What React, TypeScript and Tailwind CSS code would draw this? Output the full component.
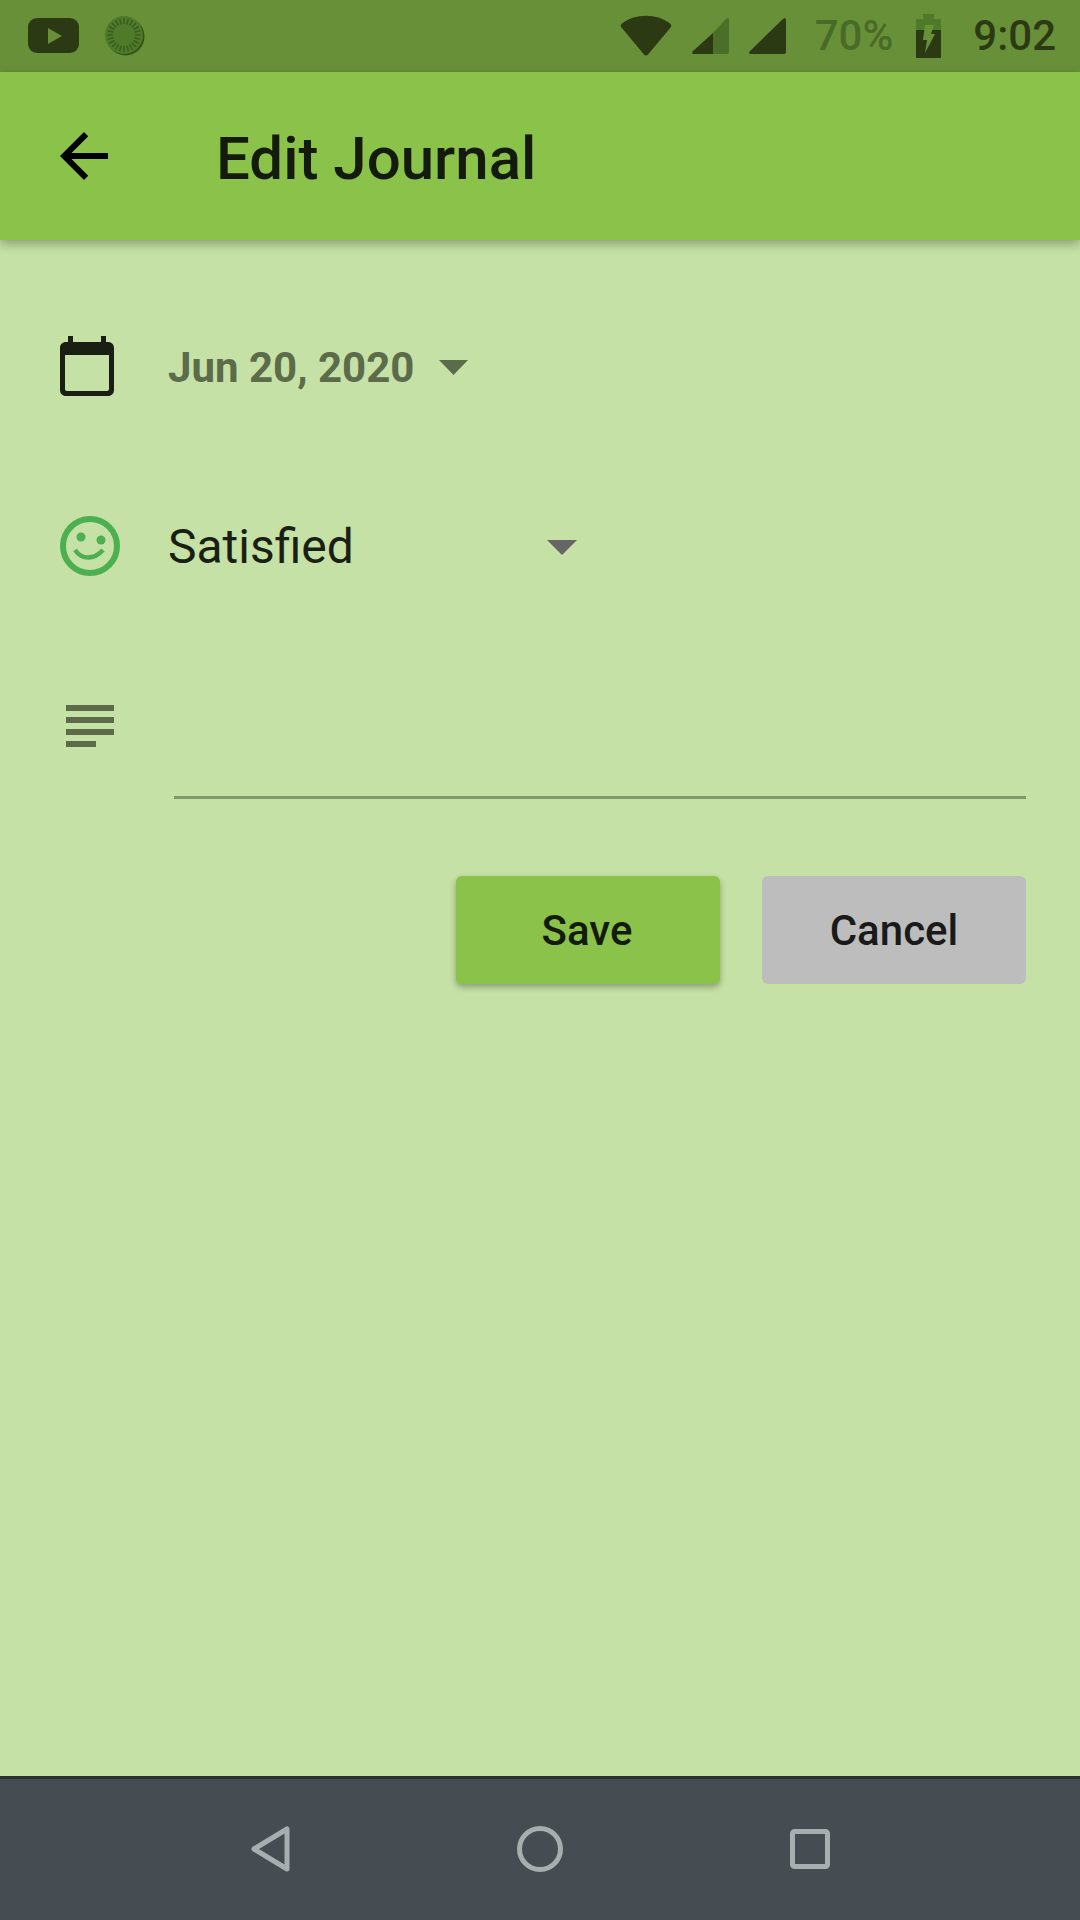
const ticks = Array.from({ length: 24 }, (_, i) => i * 15);

const StatusBar = () => (
  <div className="flex h-[72px] w-full shrink-0 items-center bg-[#689038]">
    <svg width="51" height="35" viewBox="0 0 51 35" className="ml-[28px] mb-[1px]">
      <rect width="51" height="35" rx="9" fill="#2c3a14" />
      <path d="M20 10 L34 18 L20 26 Z" fill="#689038" />
    </svg>
    <svg width="42" height="42" viewBox="0 0 42 42" className="ml-[25px]">
      <circle cx="21.5" cy="21.5" r="19" fill="#36521b" />
      <circle cx="20" cy="20" r="19" fill="#4f7a2a" />
      {ticks.map((a) => (
        <line
          key={a}
          x1="20"
          y1="3"
          x2="20"
          y2="9"
          stroke="#3a5c1e"
          strokeWidth="1.5"
          transform={`rotate(${a} 20 20)`}
        />
      ))}
    </svg>
    <svg width="52" height="42" viewBox="0 0 52 42" className="ml-auto mb-[2px]">
      <path
        d="M1.5 10 C14 -1 38 -1 50.5 10 C51.5 11 51.5 12 51 13 L28 40.5 C27 41.8 25 41.8 24 40.5 L1 13 C0.5 12 0.5 11 1.5 10 Z"
        fill="#2c3a14"
      />
    </svg>
    <svg width="37" height="37" viewBox="0 0 37 37" className="ml-[20px] mb-[2px]">
      <path d="M21 16 L34 2 C35.5 0.5 37 1 37 3 L37 35 C37 36 36 37 35 37 L21 37 Z" fill="#4b6f28" />
      <path d="M21 16 L21 37 L2 37 C0 37 -0.5 35.5 1 34 Z" fill="#2c3a14" />
    </svg>
    <svg width="37" height="37" viewBox="0 0 37 37" className="ml-[20px] mb-[2px]">
      <path d="M34 2 C35.5 0.5 37 1 37 3 L37 35 C37 36 36 37 35 37 L2 37 C0 37 -0.5 35.5 1 34 Z" fill="#2c3a14" />
    </svg>
    <span className="ml-[29px] font-['Roboto',sans-serif] text-[42px] font-medium leading-none text-[#4a6b28]">70%</span>
    <svg width="25" height="44" viewBox="0 0 25 44" className="ml-[23px]">
      <rect x="7" y="0" width="11" height="5" fill="#4f7a2a" />
      <rect x="0" y="5" width="25" height="11" fill="#4f7a2a" />
      <rect x="0" y="16" width="25" height="28" fill="#2c3a14" />
      <path d="M9 11 L18 11 L15 20 L19 20 L9 39 L11 26 L7 26 Z" fill="#689038" />
    </svg>
    <span className="ml-[32px] mr-[24px] font-['Roboto',sans-serif] text-[42px] font-medium leading-none text-[#2c3a14]">9:02</span>
  </div>
);

const AppBar = () => (
  <div className="relative z-10 flex h-[168px] w-full shrink-0 items-center bg-[#8bc34a] pl-[48px] shadow-[0_4px_10px_rgba(0,0,0,0.3)]">
    <svg width="72" height="72" viewBox="0 0 24 24">
      <path d="M20 11H7.83l5.59-5.59L12 4l-8 8 8 8 1.41-1.41L7.83 13H20v-2z" fill="#000" />
    </svg>
    <span className="ml-[96px] pt-[6px] font-['Roboto',sans-serif] text-[60px] font-medium leading-none text-[#141a0c]">
      Edit Journal
    </span>
  </div>
);

const Caret = ({ color, w, h }: { color: string; w: number; h: number }) => (
  <svg width={w} height={h} viewBox={`0 0 ${w} ${h}`}>
    <path d={`M0 0 L${w} 0 L${w / 2} ${h} Z`} fill={color} />
  </svg>
);

const App = () => {
  return (
    <div className="flex h-[1920px] w-[1080px] flex-col overflow-hidden bg-[#c5e1a5]">
      <StatusBar />
      <AppBar />
      <main className="flex flex-1 flex-col pl-[60px] pr-[54px]">
        <div className="mt-[96px] flex h-[60px] items-center">
          <svg width="54" height="60" viewBox="0 0 54 60">
            <path
              d="M8 6 V0 H13 V6 H41 V0 H46 V6 H48 C51.5 6 54 8.5 54 12 V54 C54 57.5 51.5 60 48 60 H6 C2.5 60 0 57.5 0 54 V12 C0 8.5 2.5 6 6 6 Z M5 19 V53 C5 54.2 5.8 55 7 55 H47 C48.2 55 49 54.2 49 53 V19 Z"
              fill="#1a1f14"
              fillRule="evenodd"
            />
          </svg>
          <span className="ml-[54px] pt-[4px] font-['Roboto',sans-serif] text-[42px] font-bold leading-none text-[#5c6b4a]">
            Jun 20, 2020
          </span>
          <span className="ml-[25px] flex pt-[2px]">
            <Caret color="#5c6b4a" w={29} h={15} />
          </span>
        </div>

        <div className="mt-[120px] flex h-[60px] items-center">
          <svg width="60" height="60" viewBox="0 0 60 60">
            <circle cx="30" cy="30" r="27" fill="none" stroke="#4caf50" strokeWidth="6" />
            <circle cx="21" cy="21" r="4.5" fill="#4caf50" />
            <circle cx="41" cy="24" r="4.5" fill="#4caf50" />
            <path d="M15 34 C22 44 34 44 43 34" fill="none" stroke="#4caf50" strokeWidth="4.5" />
          </svg>
          <span className="ml-[48px] pt-[2px] font-['Roboto',sans-serif] text-[48px] leading-none text-[#1a1f14]">
            Satisfied
          </span>
          <span className="ml-[193px] flex pt-[2px]">
            <Caret color="#666666" w={30} h={15} />
          </span>
        </div>

        <div className="ml-[6px] mt-[129px] flex w-[48px] flex-col gap-[6px]">
          <div className="h-[6px] w-[48px] bg-[#5c6b4a]" />
          <div className="h-[6px] w-[48px] bg-[#5c6b4a]" />
          <div className="h-[6px] w-[48px] bg-[#5c6b4a]" />
          <div className="h-[6px] w-[30px] bg-[#5c6b4a]" />
        </div>

        <div className="ml-[114px] mt-[49px] h-[3px] bg-[#7e9a6a]" />

        <div className="mt-[77px] flex justify-end gap-[42px]">
          <button className="flex h-[108px] w-[264px] items-center justify-center rounded-[6px] bg-[#8bc34a] pr-[2px] font-['Roboto',sans-serif] text-[42px] font-medium text-[#141a0c] shadow-[0_3px_6px_rgba(0,0,0,0.3)]">
            Save
          </button>
          <button className="flex h-[108px] w-[264px] items-center justify-center rounded-[6px] bg-[#bdbdbd] font-['Roboto',sans-serif] text-[42px] font-medium text-[#1a1a1a]">
            Cancel
          </button>
        </div>
      </main>
      <nav className="flex h-[144px] w-full shrink-0 items-center border-t-[3px] border-[#2a3130] bg-[#454d52] pb-[2px]">
        <svg width="39" height="46" viewBox="0 0 39 46" className="ml-[251px]">
          <path d="M36 3 V43 L3 23 Z" fill="none" stroke="#a8adaf" strokeWidth="5" strokeLinejoin="round" />
        </svg>
        <svg width="46" height="46" viewBox="0 0 46 46" className="ml-[227px]">
          <circle cx="23" cy="23" r="20.5" fill="none" stroke="#a8adaf" strokeWidth="5" />
        </svg>
        <svg width="40" height="40" viewBox="0 0 40 40" className="ml-[227px]">
          <rect x="2.5" y="2.5" width="35" height="35" rx="2" fill="none" stroke="#a8adaf" strokeWidth="5" />
        </svg>
      </nav>
    </div>
  );
};

export default App;
